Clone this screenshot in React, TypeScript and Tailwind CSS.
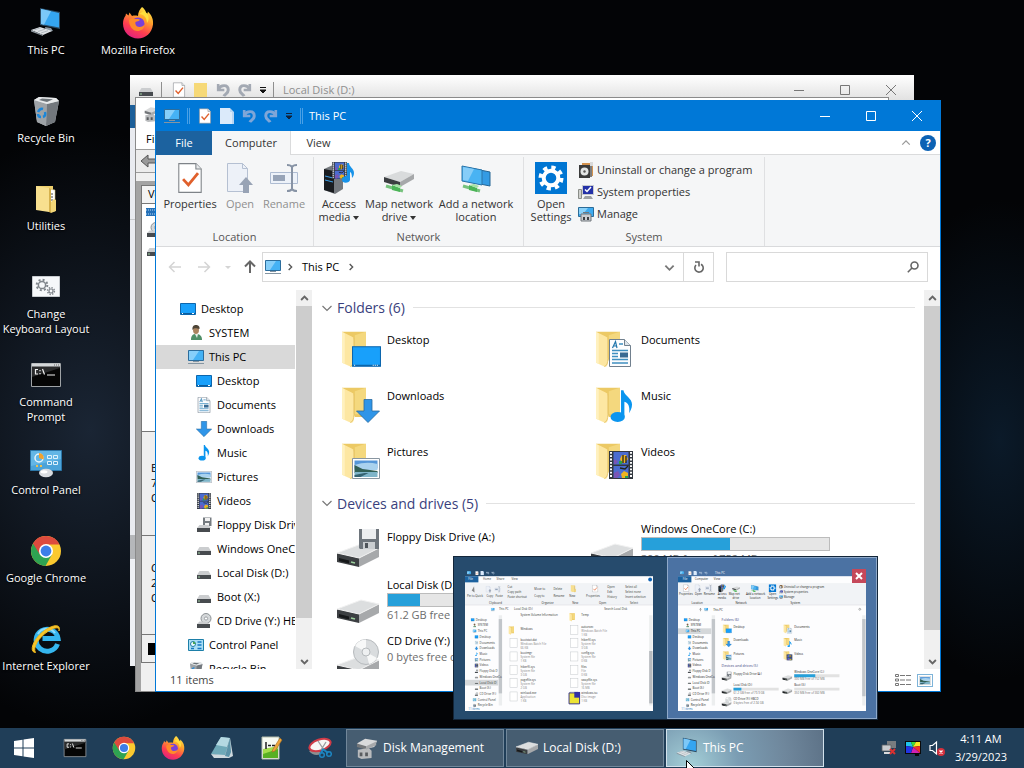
import type { ReactNode, SVGProps } from "react";

type IconProps = SVGProps<SVGSVGElement>;
type Icon = (props: IconProps) => ReactNode;

/* ---------- Icons ---------- */

const PcAngled: Icon = (p) => (
  <svg viewBox="0 0 32 32" {...p}>
    <path d="M10 1l20 4v17L10 18z" fill="#2b4a63" />
    <path d="M11 2l18 4v14.500L11 17z" fill="#35a5f0" />
    <path d="M11 2l10 2.200L14 17.700l-3-.7z" fill="#7cc8f8" />
    <path d="M15 20l6 1 2 3-7 1z" fill="#8b98a3" />
    <path d="M1 23l9-3 12 4-9 4z" fill="#dfe3e6" />
    <path d="M1 23l12 5v1L1 24.500z" fill="#8f989f" />
    <path d="M4 23l7-2.300M8 24.500l7-2.300M11 26l7-2.300" stroke="#a8b0b6" strokeWidth=".8" />
  </svg>
);

const PcFlat: Icon = (p) => (
  <svg viewBox="0 0 16 16" {...p}>
    <path d="M.5 1.500h15v10H.5z" fill="#45b2f5" stroke="#2c6d9c" />
    <path d="M1 2h10L5 11H1z" fill="#86cffa" />
    <path d="M0 14.500h16M5 12.500h6" stroke="#8495a2" />
  </svg>
);

const DesktopFlat: Icon = (p) => (
  <svg viewBox="0 0 16 16" {...p}>
    <path d="M.5 2.500h15v11H.5z" fill="#18a0fb" stroke="#0c66ad" />
    <path d="M1 12.500h14" stroke="#0b5c9c" />
    <path d="M2 12.500h1M12 12.500h2" stroke="#fff" />
  </svg>
);

const RecycleBin: Icon = (p) => (
  <svg viewBox="0 0 32 32" {...p}>
    <path d="M4 5l5-3 17 1 3 3-4 21-9 4-9-4z" fill="#bfc3c6" />
    <path d="M4 5l13 4-1 22-9-4z" fill="#9ea3a7" />
    <path d="M17 9l12-3-4 21-9 4z" fill="#73787d" />
    <path d="M4 5l5-3 17 1 3 3-12 3z" fill="#e8eaeb" />
    <path d="M9 5l3-1.500 11 .8L17 7z" fill="#6c7378" />
    <path d="M8 17q2-4 5-3M15 17q1 4-2 5M11 22q-3 0-3-3" fill="none" stroke="#1c86d8" strokeWidth="2.400" />
  </svg>
);

const UtilitiesFolder: Icon = (p) => (
  <svg viewBox="0 0 32 32" {...p}>
    <path d="M6 3h17v25H12z" fill="#efd06c" />
    <path d="M19 6l6 1v21h-6z" fill="#fff" stroke="#ccb977" strokeWidth=".6" />
    <path d="M21 11h2M21 14h2M21 17h2M21 20h2" stroke="#4a4a4a" />
    <path d="M6 3l13 2v24L6 27z" fill="#f8e08f" />
    <path d="M19 5v24l2 1V6z" fill="#d6b24e" />
    <path d="M24 16l2 1v11l-5 2V19z" fill="#f3d678" />
  </svg>
);

const Gears: Icon = (p) => (
  <svg viewBox="0 0 32 32" {...p}>
    <path d="M2.500 5.500h27v20h-27z" fill="#f6f8fa" stroke="#c8ccd0" />
    <circle cx="12" cy="14" r="3.600" fill="none" stroke="#80868c" strokeWidth="1.500" />
    <circle cx="12" cy="14" r="5.300" fill="none" stroke="#80868c" strokeWidth="2" strokeDasharray="2 2.160" />
    <circle cx="21" cy="20" r="2" fill="none" stroke="#80868c" strokeWidth="1.200" />
    <circle cx="21" cy="20" r="3.400" fill="none" stroke="#80868c" strokeWidth="1.500" strokeDasharray="1.400 1.270" />
  </svg>
);

const Cmd: Icon = (p) => (
  <svg viewBox="0 0 32 28" {...p}>
    <path d="M1.500 2.500h29v23h-29z" fill="#050505" stroke="#9fa3a6" />
    <path d="M2 4v12l28-9V4z" fill="#2a2b2c" />
    <path d="M2 4h28" stroke="#d5d8da" strokeWidth="3" />
    <path d="M24 4h5" stroke="#666" strokeDasharray="1 1" />
    <path d="M8 8.500H5.500v4.500H8M10 9v1.200M10 12v1.200M12.500 8l2 5.500M17 14h8" fill="none" stroke="#f1f1f1" strokeWidth="1.200" />
  </svg>
);

const ControlPanelIcon: Icon = (p) => (
  <svg viewBox="0 0 32 30" {...p}>
    <path d="M.5 2.500h31v20H.5z" fill="#4ba3d9" stroke="#2b76a8" />
    <path d="M1 3h30v8L1 18z" fill="#63b6e6" />
    <circle cx="9" cy="10" r="4" fill="none" stroke="#e7f4fc" strokeWidth="1.500" />
    <path d="M9 10V5a5 5 0 0 1 4.600 6.500z" fill="#f2a22c" />
    <path d="M17.500 7.500h4v3h-4zM23.500 7.500h4v3h-4zM17.500 13.500h4v3h-4zM23.500 13.500h4v3h-4z" fill="none" stroke="#dff1fb" />
    <path d="M6 18h2M10 18h2" stroke="#f2c14c" strokeWidth="2" />
    <ellipse cx="16" cy="25" rx="7" ry="4.200" fill="#d9dce0" />
    <ellipse cx="14" cy="23.800" rx="3.500" ry="1.600" fill="#fff" />
  </svg>
);

const ControlPanelSmall: Icon = (p) => (
  <svg viewBox="0 0 16 16" {...p}>
    <path d="M.5 2.500h15v11H.5z" fill="#a9def5" stroke="#1d7fa8" />
    <circle cx="5" cy="7" r="2.500" fill="#eefbff" stroke="#1d7fa8" />
    <path d="M5 7V4.500A2.500 2.500 0 0 1 7.500 7z" fill="#46a651" />
    <path d="M9.500 5h4M9.500 8h4M3 11.500h3M9.500 11.500h4" stroke="#1679c2" strokeWidth="1.500" />
  </svg>
);

const Chrome: Icon = (p) => (
  <svg viewBox="0 0 32 32" {...p}>
    <circle cx="16" cy="16" r="15" fill="#fbc92f" />
    <path d="M16 16L3 8.500A15 15 0 0 0 15.500 31L22 19.500z" fill="#2ea352" />
    <path d="M3 8.500A15 15 0 0 1 29.500 9.500H16L9.900 19.500z" fill="#dd4b3e" />
    <circle cx="16" cy="16" r="7" fill="#fff" />
    <circle cx="16" cy="16" r="5.400" fill="#3c7ee8" />
  </svg>
);

const Firefox: Icon = (p) => (
  <svg viewBox="0 0 32 32" {...p}>
    <defs>
      <linearGradient id="fx" x1=".8" y1="0" x2=".3" y2="1">
        <stop offset="0" stopColor="#fff04a" />
        <stop offset=".35" stopColor="#ffa22b" />
        <stop offset=".7" stopColor="#ff3f4f" />
        <stop offset="1" stopColor="#e0207f" />
      </linearGradient>
    </defs>
    <path d="M20 0c4 3 4 6 5 7 0 0 1-1 .8-2.500C30 8 31.500 13 31 17.500 30 26 23.500 31.500 16 31.500 7.500 31.500 1 25 1 16.500c0-3 1-6 2.500-7.800L4 6.500l2.500 2 1-3L10 9c2-.6 4-.6 6 0 0-4 2-7 4-9z" fill="url(#fx)" />
    <circle cx="16" cy="17" r="6.600" fill="#7a40d8" />
    <path d="M7 13c2-2 5-1.500 6.500-1 1.500 0 3 0 4.500.8-1 1.500-3 1.700-4.500 2.200-.5 2 .5 5 4 5 2.500 0 4-1 5.500-3-.5 5-4 7-7.500 7C10.500 24 7 19 7 13z" fill="#ff8a2a" />
    <path d="M17 7c5 0 8 4 8 9 3-4 2-9-3-12z" fill="#ffdf3d" />
  </svg>
);

const InternetExplorer: Icon = (p) => (
  <svg viewBox="0 0 32 32" {...p}>
    <path d="M27.500 21A11 11 0 1 1 28 15.500H12.500" fill="none" stroke="#35b6ef" strokeWidth="5" />
    <path d="M8 11a10 10 0 0 1 17-1" fill="none" stroke="#8fdcfb" strokeWidth="2" />
    <path d="M5.500 29.500C-2 29 4 14 16 6.500 24 1.500 31 .8 29 8 30 3.500 25 4 18.500 8 8 14.500 2.500 25.500 5.500 29.500z" fill="#f7c52b" stroke="#f0b81c" />
  </svg>
);

const Folder: Icon = (p) => (
  <svg viewBox="0 0 48 48" {...p}>
    <path d="M0 4h26v32H14z" fill="#ecc964" />
    <path d="M14 8l12-4v29H14z" fill="#f4d87e" />
    <path d="M0 4l10 5q3 1 3 4v24q0 6-4 5L0 38z" fill="#fde7a2" />
    <path d="M0 4l3 2v33l-3-1z" fill="#fff1bf" />
    <path d="M13 11v22q0 8-4 9" fill="none" stroke="#e5c56b" />
  </svg>
);

const DocPage: Icon = (p) => (
  <svg viewBox="0 0 22 28" {...p}>
    <path d="M.5.5h15l6 6v21H.5z" fill="#fdfdfe" stroke="#71808e" />
    <path d="M15.500.5v6h6" fill="#dde4ea" stroke="#71808e" />
    <path d="M3.500 9l3-6.500L8 9M5 7h3" fill="none" stroke="#2277ad" strokeWidth="1.200" />
    <path d="M10 5h4M3 11.500h16M3 14.500h6M3 17.500h6M3 20.500h16M3 24h16" stroke="#3f8fc0" strokeWidth="1.300" />
    <path d="M11 13.500h8v5h-8z" fill="#396a92" />
  </svg>
);

const DownArrow: Icon = (p) => (
  <svg viewBox="0 0 24 24" {...p}>
    <path d="M8 .5h8V12h7.500L12 23.500.5 12H8z" fill="#2f95e8" stroke="#28699f" strokeWidth=".8" />
  </svg>
);

const Note: Icon = (p) => (
  <svg viewBox="0 0 24 34" {...p}>
    <ellipse cx="8" cy="28" rx="7.500" ry="5.200" fill="#0a95ef" />
    <path d="M11.500 0h2.500c1 6 9 8 9 15 0 4-2 7-3 9 1-7-1-11-5-12v16h-3.500z" fill="#0a95ef" />
  </svg>
);

const Photo: Icon = (p) => (
  <svg viewBox="0 0 28 21" preserveAspectRatio="none" {...p}>
    <path d="M.5.5h27v20H.5z" fill="#fff" stroke="#8996a1" />
    <path d="M2.500 2.500h23v8h-23z" fill="#5597d8" />
    <path d="M2.500 7q12-4 23-1v6h-23z" fill="#a9d2ee" />
    <path d="M2.500 7l8 4 15 2v2h-23z" fill="#315f55" />
    <path d="M2.500 14h23v5h-23z" fill="#7fb5c9" />
    <path d="M2.500 17l10-2h4l-8 4h-6z" fill="#356371" />
  </svg>
);

const Film: Icon = (p) => (
  <svg viewBox="0 0 24 28" preserveAspectRatio="none" {...p}>
    <path d="M0 0h24v28H0z" fill="#333840" />
    <path d="M2 1v26M22 1v26" stroke="#fff" strokeWidth="2" strokeDasharray="1.800 1.500" />
    <path d="M4.500 1h15v12.500h-15zM4.500 15h15v12h-15z" fill="#4b6cd0" />
    <path d="M13 4h4l2 4-3 4h-3l-2-4zM12 23l3-3 4 2v5h-6z" fill="#efb320" />
    <path d="M5 8l4 2-2 3H5zM5 22l4-2 2 4-3 3H5z" fill="#7a55b5" />
    <path d="M14 4v8M17 5v7M11 17l5 1 3-3" fill="none" stroke="#20241e" strokeWidth="1.300" />
    <path d="M10 10h3v3h-3zM16 25h3v2h-3z" fill="#2aa24a" />
  </svg>
);

const Person: Icon = (p) => (
  <svg viewBox="0 0 16 16" {...p}>
    <path d="M3 15c0-5 2-6 5-6s6 1 6 6z" fill="#4f8f68" />
    <path d="M7 9h3l-1 4z" fill="#e9efe9" />
    <ellipse cx="8" cy="5" rx="3" ry="4" fill="#a9835f" />
    <path d="M4.500 5C4 1 6 0 8 0s4 1 3.500 4C9 4 7 2 4.500 5z" fill="#4d4436" />
  </svg>
);

const SmallDrive: Icon = (p) => (
  <svg viewBox="0 0 16 16" {...p}>
    <path d="M3.500 6h9L15 10H1z" fill="#cbcdcf" />
    <path d="M1 10h14v4H1z" fill="#474b4f" />
    <path d="M2 12h2" stroke="#9fd0a0" />
  </svg>
);

const SmallFloppy: Icon = (p) => (
  <svg viewBox="0 0 16 16" {...p}>
    <path d="M7 .5h8.500V9H7z" fill="#757b80" />
    <path d="M9 1h5v3H9zM9 6h4v3H9z" fill="#f1f1f1" />
    <path d="M3.500 8h9l2.500 3H1z" fill="#cbcdcf" />
    <path d="M1 11h13v4H1z" fill="#474b4f" />
  </svg>
);

const SmallCd: Icon = (p) => (
  <svg viewBox="0 0 16 16" {...p}>
    <circle cx="10" cy="5.500" r="5" fill="#d5d8da" stroke="#8c9195" />
    <circle cx="10" cy="5.500" r="1.600" fill="#fff" stroke="#8c9195" strokeWidth=".8" />
    <path d="M3.500 8.500h5l5 2.500H1z" fill="#cbcdcf" />
    <path d="M1 11h13v4H1z" fill="#474b4f" />
  </svg>
);

const DriveBody = () => (
  <>
    <path d="M0 27l24-9 18 4-20 10z" fill="#dcdedf" />
    <path d="M0 27l22 5v9L0 36z" fill="#3c3f42" />
    <path d="M22 32l20-10v9L22 41z" fill="#a7a9ab" />
    <path d="M0 27l24-9 18 4-20 10z" fill="none" stroke="#f2f2f2" />
    <path d="M2 32l10 2.500v3L2 35z" fill="#16181a" />
    <path d="M14 36l4 1" stroke="#9ccf9d" strokeWidth="1.300" />
  </>
);

const Drive: Icon = (p) => <svg viewBox="0 0 42 42" {...p}><DriveBody /></svg>;

const FloppyDrive: Icon = (p) => (
  <svg viewBox="0 0 42 42" {...p}>
    <DriveBody />
    <path d="M22 3h20v20H23l-1-1z" fill="#6e757c" />
    <path d="M25 3h14v10H25z" fill="#eceef0" />
    <path d="M26 16h12v7H26z" fill="#c9cdd0" />
    <path d="M28 17h3v5h-3z" fill="#4e545a" />
  </svg>
);

const CdDrive: Icon = (p) => (
  <svg viewBox="0 0 42 42" {...p}>
    <DriveBody />
    <circle cx="29" cy="14" r="12.500" fill="#d9dcde" stroke="#b6babd" />
    <path d="M29 14L18 8a12.500 12.500 0 0 1 11-6.500zM29 14l11 6a12.500 12.500 0 0 1-8 6z" fill="#f7f8f8" />
    <circle cx="29" cy="14" r="4" fill="#eef0f1" stroke="#b6babd" />
  </svg>
);

const PageCheck: Icon = (p) => (
  <svg viewBox="0 0 24 30" {...p}>
    <path d="M1.500 1.500h16l5 5v22h-21z" fill="#fff" stroke="#7e8388" />
    <path d="M17.500 1.500v5h5" fill="#e8eaec" stroke="#7e8388" />
    <path d="M5.500 16l5 5.500 9-11" fill="none" stroke="#e0602c" strokeWidth="2.600" />
  </svg>
);

const PageBlank: Icon = (p) => (
  <svg viewBox="0 0 14 16" {...p}><path d="M0 0h10v4h3v12H0z" fill="#dbeafa" /><path d="M10 0l4 4v12h-2V4h-2z" fill="#b9d5f3" /></svg>
);

const Undo: Icon = (p) => (
  <svg viewBox="0 0 16 16" {...p}>
    <path d="M2.500 1v7h7" fill="none" stroke="currentColor" strokeWidth="3" />
    <path d="M3 7c2-5 11-6 11 1 0 4-4 5-5 7" fill="none" stroke="currentColor" strokeWidth="3.400" />
  </svg>
);

const QuickCaret: Icon = (p) => (
  <svg viewBox="0 0 8 8" {...p}><path d="M1 1.500h6M1 4h6L4 7z" fill="currentColor" stroke="currentColor" /></svg>
);

const OpenPage: Icon = (p) => (
  <svg viewBox="0 0 32 32" {...p}>
    <path d="M3.500 1.500h15l5 5v23h-20z" fill="#edf1f8" stroke="#b5c0d2" />
    <path d="M18.500 1.500v5h5" fill="none" stroke="#b5c0d2" />
    <path d="M22 15l7 8h-4v8h-6v-8h-4z" fill="#98a3b5" />
  </svg>
);

const RenameIcon: Icon = (p) => (
  <svg viewBox="0 0 32 32" {...p}>
    <path d="M2.500 10.500h27v11h-27z" fill="#edf2f9" stroke="#aebcd2" />
    <path d="M5 13h12v6H5z" fill="#97a4b8" />
    <path d="M19 3q4 0 5 2 1-2 5-2M24 5v22M19 29q4 0 5-2 1 2 5 2" fill="none" stroke="#8793a5" strokeWidth="2" />
  </svg>
);

const AccessMedia: Icon = (p) => (
  <svg viewBox="0 0 32 32" {...p}>
    <path d="M1 7l9-4 10 2v22l-8 5-11-4z" fill="#74797e" />
    <path d="M1 7l10 2v22L1 28z" fill="#191c20" />
    <path d="M2 14l8 2M2 18l8 2" stroke="#3da1ea" />
    <svg x="9" y="0" width="15" height="17"><Film width="15" height="17" /></svg>
    <path d="M26 1c0 4 5 5 5 10 0 2-1 4-2 5 0-4-1-6-2-6v8c0 3-8 4-8 0 0-3 3-4 5-4V1z" fill="#1893e9" />
  </svg>
);

const NetPlug = () => (
  <>
    <path d="M3 24l17 5" stroke="#76c27d" strokeWidth="3" />
    <path d="M9 23l8 3v4l-8-2z" fill="#4bb457" />
    <path d="M9 23l5-1 5 2-2 2z" fill="#a6e1a5" />
  </>
);

const NetDrive: Icon = (p) => (
  <svg viewBox="0 0 32 32" {...p}>
    <path d="M1 15l17-6 13 3-14 8z" fill="#d9dbdc" />
    <path d="M1 15l16 5v5L1 20z" fill="#3b3e41" />
    <path d="M17 20l14-8v5l-14 8z" fill="#a6a8aa" />
    <NetPlug />
  </svg>
);

const NetLocation: Icon = (p) => (
  <svg viewBox="0 0 32 32" {...p}>
    <path d="M10 6l20 4v14l-20-4z" fill="#349be4" stroke="#246594" />
    <path d="M2 4l20 4v15L2 19z" fill="#49b3f3" stroke="#2b74a8" />
    <path d="M3 5l11 2-6 12-5-1z" fill="#86cdf8" />
    <NetPlug />
  </svg>
);

const SettingsTile: Icon = (p) => (
  <svg viewBox="0 0 32 32" {...p}>
    <path d="M0 0h32v32H0z" fill="#0076d3" />
    <circle cx="16" cy="16" r="7.300" fill="none" stroke="#fff" strokeWidth="4" />
    <circle cx="16" cy="16" r="10.500" fill="none" stroke="#fff" strokeWidth="4" strokeDasharray="4.200 4.046" />
  </svg>
);

const Uninstall: Icon = (p) => (
  <svg viewBox="0 0 16 16" {...p}>
    <path d="M4 1h11v13H4z" fill="#d3924e" />
    <path d="M12 0h3v4h-3z" fill="#d9d9d9" />
    <path d="M1 3h11v13H1z" fill="#3a3b3b" />
    <circle cx="6.500" cy="9.500" r="4" fill="#e3e5e5" />
    <circle cx="6.500" cy="9.500" r="1.200" fill="#585858" />
    <path d="M13 4v11" stroke="#7d7d7d" strokeWidth="2" />
  </svg>
);

const SystemProps: Icon = (p) => (
  <svg viewBox="0 0 16 16" {...p}>
    <path d="M.5 5.500h3v9h-3z" fill="#cfd0cd" stroke="#8a8d88" />
    <path d="M4 1h12v10H4z" fill="#c7cacf" />
    <path d="M5 2h10v8H5z" fill="#2431a8" />
    <path d="M7 5.500l2 2 4-4.500" fill="none" stroke="#fff" strokeWidth="1.500" />
    <path d="M7 12h6l2 3H5z" fill="#9ea1a4" />
  </svg>
);

const ManageIcon: Icon = (p) => (
  <svg viewBox="0 0 16 16" {...p}>
    <path d="M.5 1.500h15v9H.5z" fill="#3fabf0" stroke="#2c6c98" />
    <path d="M1 2h9L5 8H1z" fill="#8ad2fa" />
    <path d="M5 6.500h6M3 8h10v7H3z" fill="#c9cdd1" stroke="#70767c" />
    <path d="M5 11h2v3H5zM9 11h2v3H9z" fill="#3c4146" />
  </svg>
);

const DiskMgmtIcon: Icon = (p) => (
  <svg viewBox="0 0 24 24" {...p}>
    <path d="M1 7l9-5 13 2-3 7-10 2z" fill="#d9dadb" />
    <path d="M1 7l10 3v4L1 11z" fill="#74777a" />
    <path d="M2 14l12-2 3 3v8l-11 1-4-2z" fill="#b9bbbd" />
    <path d="M4 17h3v4H4zM10 17h3v4h-3z" fill="#595c5f" />
    <path d="M11 10l11-5v4l-11 5z" fill="#a7a9ab" />
  </svg>
);

const WinLogo: Icon = (p) => (
  <svg viewBox="0 0 22 22" {...p}>
    <path d="M1 4l8.500-1.300v7.800H1zM10.500 2.500L21 1v9.500H10.500zM1 11.500h8.500v7.800L1 18zM10.500 11.500H21V21l-10.500-1.500z" fill="#fff" />
  </svg>
);

const Notepad: Icon = (p) => (
  <svg viewBox="0 0 24 24" {...p}>
    <path d="M11 1l9 1-5 18-14-2z" fill="#6fa9b8" />
    <path d="M11 1l9 1-3 9L6 9z" fill="#b5d9e2" />
    <path d="M20 2l3 18-4 2H4l-3-4 14 1z" fill="#cfd9de" />
    <path d="M20 2l-5 18 4 1 2-5z" fill="#5c93a8" />
  </svg>
);

const NotepadPlus: Icon = (p) => (
  <svg viewBox="0 0 24 24" {...p}>
    <path d="M3 1h17v22H3z" fill="#f7faf2" stroke="#b4bba9" />
    <path d="M4 13l15-3v12H4z" fill="#a5dd4c" />
    <path d="M4 18l15-5v9H4z" fill="#58b024" />
    <path d="M7 6v7M9 9.500h3M13 9.500h3" stroke="#222" strokeWidth="1.500" />
    <path d="M21 2l2 2-7 11-3 1 1-3z" fill="#eda43b" stroke="#a36b1f" strokeWidth=".6" />
  </svg>
);

const Snip: Icon = (p) => (
  <svg viewBox="0 0 24 24" {...p}>
    <path d="M1 15q5 6 12 3l-3-5z" fill="#8d9091" />
    <ellipse cx="12" cy="9" rx="11" ry="5.500" fill="#f7f6f5" stroke="#cf3b47" strokeWidth="2" transform="rotate(-18 12 9)" />
    <path d="M10 5l6 9M18 6l-5 8" stroke="#9a9da0" strokeWidth="1.300" />
    <path d="M15 13l-2 4M15 13l5 4" stroke="#1d86c2" strokeWidth="2" />
    <circle cx="14" cy="19" r="2.300" fill="none" stroke="#1d86c2" strokeWidth="1.500" />
    <circle cx="21" cy="18" r="2.300" fill="none" stroke="#1d86c2" strokeWidth="1.500" />
  </svg>
);

const Chevron: Icon = (p) => (
  <svg viewBox="0 0 12 12" fill="none" stroke="currentColor" strokeWidth="1.500" {...p}><path d="M1.500 4l4.500 4.500L10.500 4" /></svg>
);

const Arrow: Icon = (p) => (
  <svg viewBox="0 0 14 14" fill="none" stroke="currentColor" strokeWidth="1.500" {...p}><path d="M13 7H2M6.500 2L1.500 7l5 5" /></svg>
);

const BadgeX = () => (
  <>
    <circle cx="12" cy="12" r="4" fill="#d5303d" />
    <path d="M10.500 10.500l3 3M13.500 10.500l-3 3" stroke="#fff" strokeWidth="1.300" />
  </>
);

const NetTray: Icon = (p) => (
  <svg viewBox="0 0 16 16" {...p}>
    <path d="M6 1h9v7H6z" fill="#797c80" />
    <path d="M1 5h9v6H1z" fill="#c9cccf" stroke="#5b5e61" strokeWidth=".8" />
    <path d="M3 13h6" stroke="#d9dbdd" strokeWidth="2" />
    <path d="M9 9l5 5M14 9l-5 5" stroke="#da3030" strokeWidth="2" />
  </svg>
);

const ColorTray: Icon = (p) => (
  <svg viewBox="0 0 16 16" {...p}>
    <path d="M0 1h16v13h-2v2h-4v-2H0z" fill="#0a0a0a" />
    <path d="M1 2h5l2 5-7-1z" fill="#1fc3ea" />
    <path d="M6 2h5L8 7z" fill="#3ddc3d" />
    <path d="M11 2h4v4L8 7z" fill="#f6ea24" />
    <path d="M15 6v7L8 7z" fill="#f0312a" />
    <path d="M15 13H6l2-6z" fill="#d021b4" />
    <path d="M6 13H1V6l7 1z" fill="#2235e4" />
  </svg>
);

const VolumeTray: Icon = (p) => (
  <svg viewBox="0 0 16 16" {...p}>
    <path d="M1 5.500h2.500L7.500 2v12l-4-3.500H1z" fill="none" stroke="#fff" strokeWidth="1.200" />
    <BadgeX />
  </svg>
);

/* ---------- Desktop ---------- */

const desktopColumns: { lines: string[]; icon: Icon }[][] = [
  [
    { lines: ["This PC"], icon: PcAngled },
    { lines: ["Recycle Bin"], icon: RecycleBin },
    { lines: ["Utilities"], icon: UtilitiesFolder },
    { lines: ["Change", "Keyboard Layout"], icon: Gears },
    { lines: ["Command", "Prompt"], icon: Cmd },
    { lines: ["Control Panel"], icon: ControlPanelIcon },
    { lines: ["Google Chrome"], icon: Chrome },
    { lines: ["Internet Explorer"], icon: InternetExplorer },
  ],
  [{ lines: ["Mozilla Firefox"], icon: Firefox }],
];

function DesktopIcons() {
  return (
    <div className="flex">
      {desktopColumns.map((column, c) => (
        <div key={c} className="flex w-[92px] flex-col">
          {column.map(({ lines, icon: I }) => (
            <button key={lines[0]} className="flex h-[88px] flex-col items-center pt-[7px] leading-[15px] text-white">
              <I className="mb-[3px] size-8 shrink-0" />
              {lines.map((line) => <span key={line} className="whitespace-nowrap [text-shadow:0_1px_2px_#000]">{line}</span>)}
            </button>
          ))}
        </div>
      ))}
    </div>
  );
}

/* ---------- Window parts ---------- */

function CaptionButtons({ className }: { className: string }) {
  return (
    <div className={`flex h-full ${className}`}>
      <button aria-label="Minimize" className="grid w-[46px] place-items-center">
        <svg viewBox="0 0 10 10" className="size-[10px]"><path d="M0 5.500h10" stroke="currentColor" /></svg>
      </button>
      <button aria-label="Maximize" className="grid w-[46px] place-items-center">
        <svg viewBox="0 0 10 10" className="size-[10px]"><path d="M.5.5h9v9h-9z" fill="none" stroke="currentColor" /></svg>
      </button>
      <button aria-label="Close" className="grid w-[46px] place-items-center">
        <svg viewBox="0 0 10 10" className="size-[10px]"><path d="M0 0l10 10M10 0L0 10" stroke="currentColor" /></svg>
      </button>
    </div>
  );
}

function LocalDiskWindow() {
  return (
    <section className="absolute top-[75px] left-[130px] flex h-[591px] w-[784px] flex-col bg-[#e9ebf0]">
      <header className="flex h-[30px] items-center bg-gradient-to-b from-white to-[#dcdcdc] pl-2 text-[#8f8f8f]">
        <SmallDrive className="size-4" />
        <span className="mr-[10px] ml-[7px] h-4 w-px bg-[#8f8f8f]" />
        <div className="flex items-center gap-2 text-[#a3a9b3]">
          <PageCheck className="h-4 w-[14px]" />
          <svg viewBox="0 0 14 16" className="h-4 w-[14px]"><path d="M0 1h13v15H0z" fill="#f6d978" /></svg>
          <Undo className="size-[14px]" />
          <Undo className="size-[14px] -scale-x-100" />
        </div>
        <QuickCaret className="ml-[7px] size-2 text-[#111]" />
        <span className="mx-[6px] h-4 w-px bg-[#8f8f8f]" />
        <h2 className="ml-[3px] grow">Local Disk (D:)</h2>
        <CaptionButtons className="text-[#777]" />
      </header>
      <div className="h-[23px] bg-[#1c5f99]" />
      <div className="h-[92px] border-b border-[#c7c9cc]" />
      <div className="grow" />
      <div className="h-6 bg-[#b5b7ba]" />
      <div className="h-[107px] bg-[#eef0f4]" />
    </section>
  );
}

function DiskManagementWindow() {
  return (
    <section className="absolute top-[97px] left-[135px] flex h-[595px] w-[754px] flex-col border border-[#8a8a8a] bg-white text-black">
      <header className="flex h-[31px] items-center pl-2"><DiskMgmtIcon className="size-4" /></header>
      <nav className="h-5 pl-[10px] leading-5">File</nav>
      <div className="flex h-6 items-center border-y border-[#9b9b9b] bg-[#ececec] pl-1">
        <svg viewBox="0 0 16 14" className="h-[14px] w-4"><path d="M1 7l7-6v4h8v4H8v4z" fill="#999" stroke="#555" /></svg>
      </div>
      <div className="h-2 bg-[#f0f0f0]" />
      <div className="flex grow flex-col bg-[#a3a3a3] pt-1 pl-[5px]">
        <div className="h-[247px] border border-[#777] bg-white">
          <div className="h-[18px] border-b border-[#777] bg-[#f3f3f3] pl-[6px]">Volume</div>
          <div className="flex flex-col gap-1 pt-1 pl-1">
            <svg viewBox="0 0 16 10" className="h-[10px] w-4"><path d="M0 0h16v8H0z" fill="#2470b8" /><path d="M0 2h16M0 6h16" stroke="#bcd9f2" strokeDasharray="1 1" /></svg>
            <SmallCd className="size-4" />
            <SmallDrive className="size-4" />
          </div>
        </div>
        <div className="flex h-[104px] flex-col border border-t-0 border-[#777] bg-[#efefef] pt-[28px] pl-[9px] leading-[15px]">
          <span>Basic</span><span>79.98 GB</span><span>Online</span>
        </div>
        <div className="flex h-[99px] flex-col border border-t-0 border-[#777] bg-[#efefef] pt-[24px] pl-[9px] leading-[15px]">
          <span>CD-ROM</span><span>252 MB</span><span>Online</span>
        </div>
        <div className="flex h-[28px] items-center border-x border-b border-[#777] bg-[#f0f0f0] pl-[6px]">
          <span className="size-3 bg-black" />
        </div>
        <div className="grow bg-[#f0f0f0]" />
      </div>
    </section>
  );
}

/* ---------- Explorer window ---------- */

function BigCommand({ icon: I, label, className = "text-[#333]", menu = false }: { icon: Icon; label: ReactNode; className?: string; menu?: boolean }) {
  return (
    <button className={`flex flex-col items-center gap-[3px] leading-[13px] ${className}`}>
      <I className="size-8" />
      <span>
        {label}
        {menu && <svg viewBox="0 0 6 4" className="ml-[3px] inline h-1 w-[6px] align-middle"><path d="M0 0h6L3 4z" fill="#333" /></svg>}
      </span>
    </button>
  );
}

function RibbonGroup({ title, className, children }: { title: string; className: string; children: ReactNode }) {
  return (
    <section className={`mt-[2px] flex flex-col border-r border-[#dfe0e2] ${className}`}>
      <div className="flex h-[72px] items-start pt-[5px]">{children}</div>
      <h3 className="text-center leading-4 text-[#555]">{title}</h3>
    </section>
  );
}

const systemCommands = [
  { label: "Uninstall or change a program", icon: Uninstall },
  { label: "System properties", icon: SystemProps },
  { label: "Manage", icon: ManageIcon },
];

function Ribbon() {
  return (
    <div className="flex h-[92px] shrink-0 border-b border-[#d9dadc] bg-[#f5f6f7]">
      <RibbonGroup title="Location" className="w-[158px]">
        <BigCommand icon={PageCheck} label="Properties" className="w-[68px] text-[#333]" />
        <BigCommand icon={OpenPage} label="Open" className="w-[32px] text-[#8f8f8f]" />
        <BigCommand icon={RenameIcon} label="Rename" className="w-[56px] text-[#8f8f8f]" />
      </RibbonGroup>
      <RibbonGroup title="Network" className="w-[210px]">
        <BigCommand icon={AccessMedia} label={<>Access<br />media</>} menu className="w-[50px] text-[#333]" />
        <BigCommand icon={NetDrive} label={<>Map network<br />drive</>} menu className="w-[70px] text-[#333]" />
        <BigCommand icon={NetLocation} label={<>Add a network<br />location</>} className="w-[84px] text-[#333]" />
      </RibbonGroup>
      <RibbonGroup title="System" className="w-[241px]">
        <BigCommand icon={SettingsTile} label={<>Open<br />Settings</>} className="w-[54px] text-[#333]" />
        <div className="-mt-[3px] flex flex-col">
          {systemCommands.map(({ label, icon: I }) => (
            <button key={label} className="flex h-[22px] items-center gap-[3px] text-[#333]">
              <I className="size-4" />
              {label}
            </button>
          ))}
        </div>
      </RibbonGroup>
    </div>
  );
}

function AddressRow() {
  return (
    <div className="flex shrink-0 items-center pt-[5px] pr-3 pb-2 pl-3">
      <button aria-label="Back" className="w-[29px] text-[#d4d4d4]"><Arrow className="size-[14px]" /></button>
      <button aria-label="Forward" className="w-[27px] text-[#d4d4d4]"><Arrow className="size-[14px] -scale-x-100" /></button>
      <button aria-label="Recent locations" className="w-[19px] text-[#d4d4d4]">
        <svg viewBox="0 0 8 5" className="h-[5px] w-2"><path d="M1 1h6L4 4z" fill="currentColor" /></svg>
      </button>
      <button aria-label="Up" className="w-[19px] text-[#666]"><Arrow className="size-[14px] rotate-90" strokeWidth="2" /></button>
      <div className="flex h-[30px] grow items-center border border-[#d9d9d9] pl-[2px]">
        <PcFlat className="size-4" />
        <Chevron className="ml-[5px] size-2 -rotate-90 text-[#555]" strokeWidth="2" />
        <button className="ml-2">This PC</button>
        <Chevron className="ml-2 size-2 -rotate-90 text-[#555]" strokeWidth="2" />
        <button aria-label="Previous locations" className="ml-auto grid h-full w-[28px] place-items-center text-[#777]"><Chevron className="size-[11px]" strokeWidth="2" /></button>
        <button aria-label="Refresh" className="grid h-full w-[30px] place-items-center border-l border-[#d9d9d9] text-[#666]">
          <svg viewBox="0 0 12 14" className="h-[14px] w-3" fill="none" stroke="currentColor" strokeWidth="1.600"><path d="M8 4.200A4.200 4.200 0 1 1 3 5" /><path d="M2 2h4v4.500" /></svg>
        </button>
      </div>
      <label className="ml-3 flex h-[30px] w-[202px] items-center border border-[#d9d9d9] pr-2">
        <input aria-label="Search This PC" className="min-w-0 grow outline-none" />
        <svg viewBox="0 0 12 12" className="size-3 text-[#666]" fill="none" stroke="currentColor" strokeWidth="1.600"><circle cx="7.500" cy="4.500" r="3.500" /><path d="M5 7L.8 11.200" /></svg>
      </label>
    </div>
  );
}

const tree: { label: string; icon: Icon; level: number }[] = [
  { label: "Desktop", icon: DesktopFlat, level: 0 },
  { label: "SYSTEM", icon: Person, level: 1 },
  { label: "This PC", icon: PcFlat, level: 1 },
  { label: "Desktop", icon: DesktopFlat, level: 2 },
  { label: "Documents", icon: DocPage, level: 2 },
  { label: "Downloads", icon: DownArrow, level: 2 },
  { label: "Music", icon: Note, level: 2 },
  { label: "Pictures", icon: Photo, level: 2 },
  { label: "Videos", icon: Film, level: 2 },
  { label: "Floppy Disk Drive (A:)", icon: SmallFloppy, level: 2 },
  { label: "Windows OneCore (C:)", icon: SmallDrive, level: 2 },
  { label: "Local Disk (D:)", icon: SmallDrive, level: 2 },
  { label: "Boot (X:)", icon: SmallDrive, level: 2 },
  { label: "CD Drive (Y:) HBCD", icon: SmallCd, level: 2 },
  { label: "Control Panel", icon: ControlPanelSmall, level: 1 },
  { label: "Recycle Bin", icon: RecycleBin, level: 1 },
];

const indent = ["pl-6", "pl-8", "pl-10"];

function treeIconClass(icon: Icon) {
  if (icon === Photo) return "h-3 w-4";
  if (icon === Film || icon === DocPage) return "h-4 w-4 px-[1px]";
  return "size-4";
}

function ScrollBar({ thumb }: { thumb: string }) {
  return (
    <div className="flex w-4 shrink-0 flex-col bg-[#f0f0f0]">
      <button aria-label="Scroll up" className="grid h-4 place-items-center text-[#666]"><Chevron className="size-[9px] rotate-180" strokeWidth="2.500" /></button>
      <div className={`bg-[#cdcdcd] ${thumb}`} />
      <button aria-label="Scroll down" className="mt-auto grid h-4 place-items-center text-[#666]"><Chevron className="size-[9px]" strokeWidth="2.500" /></button>
    </div>
  );
}

function NavPane() {
  return (
    <nav className="flex w-[156px] shrink-0">
      <ul className="w-[139px] overflow-hidden pt-[7px]">
        {tree.map(({ label, icon: I, level }, n) => (
          <li key={n}>
            <button className={`flex h-6 w-full items-center gap-[5px] whitespace-nowrap ${indent[level]} ${n === 2 ? "bg-[#d9d9d9]" : ""}`}>
              <I className={`shrink-0 ${treeIconClass(I)}`} />
              {label}
            </button>
          </li>
        ))}
      </ul>
      <div className="ml-px flex"><ScrollBar thumb="h-[312px]" /></div>
    </nav>
  );
}

const DesktopTile: Icon = (p) => (
  <svg viewBox="0 0 28 20" {...p}>
    <path d="M.5.5h27v19H.5z" fill="#18a0fb" stroke="#0c66ad" />
    <path d="M1 18.500h26" stroke="#0b5c9c" />
    <path d="M2 18.500h2M20 18.500h6" stroke="#fff" strokeDasharray="1 1" />
  </svg>
);

const folders: { label: string; icon: Icon; className: string }[] = [
  { label: "Desktop", icon: DesktopTile, className: "h-[21px] w-[29px] right-0" },
  { label: "Documents", icon: DocPage, className: "h-[28px] w-[22px] right-[4px]" },
  { label: "Downloads", icon: DownArrow, className: "size-6 right-[1px]" },
  { label: "Music", icon: Note, className: "h-[33px] w-[23px] right-[2px]" },
  { label: "Pictures", icon: Photo, className: "h-[21px] w-[28px] right-[1px]" },
  { label: "Videos", icon: Film, className: "h-[28px] w-[24px] right-[2px]" },
];

function SectionHeader({ title }: { title: string }) {
  return (
    <div className="flex h-6 items-center pl-[9px]">
      <Chevron className="size-3 text-[#777]" strokeWidth="1.200" />
      <h2 className="ml-1 text-[14px] text-[#3a3f7d]">{title}</h2>
      <span className="ml-2 h-px grow bg-[#e2e2e2]" />
    </div>
  );
}

function UsageBar({ used }: { used: number }) {
  return (
    <div className="h-[14px] w-[189px] border border-[#bcbcbc] bg-[#e6e6e6]">
      <div className="h-full bg-[#26a0da]" style={{ width: `${used}%` }} />
    </div>
  );
}

function ContentPane() {
  return (
    <main className="flex grow flex-col overflow-hidden pt-[7px] pr-[9px]">
      <SectionHeader title="Folders (6)" />
      <div className="mt-[6px] grid grid-cols-[254px_254px] pl-[30px]">
        {folders.map(({ label, icon: I, className }) => (
          <button key={label} className="flex h-14 items-start gap-[6px] text-left">
            <span className="relative block h-[44px] w-[39px]">
              <Folder className="mt-1 h-[44px] w-[44px]" />
              <I className={`absolute bottom-[1px] ${className}`} />
            </span>
            <span className="pt-2 leading-4">{label}</span>
          </button>
        ))}
      </div>
      <div className="-mt-px"><SectionHeader title="Devices and drives (5)" /></div>
      <div className="mt-[6px] grid auto-rows-[56px] grid-cols-[254px_254px] pl-[25px]">
        <button className="flex items-start gap-2 text-left">
          <FloppyDrive className="mt-[5px] size-[42px]" />
          <span className="pt-2 leading-4">Floppy Disk Drive (A:)</span>
        </button>
        <button className="flex items-start gap-2 text-left">
          <Drive className="mt-[5px] size-[42px]" />
          <span className="leading-4">Windows OneCore (C:)<UsageBar used={47} /><span className="text-[#6d6d6d]">390 MB free of 752 MB</span></span>
        </button>
        <button className="flex items-start gap-2 text-left">
          <Drive className="mt-[5px] size-[42px]" />
          <span className="leading-4">Local Disk (D:)<UsageBar used={17} /><span className="text-[#6d6d6d]">61.2 GB free of 79.9 GB</span></span>
        </button>
        <span />
        <button className="flex items-start gap-2 text-left">
          <CdDrive className="mt-[5px] size-[42px]" />
          <span className="flex flex-col leading-4"><span>CD Drive (Y:) HBCD</span><span className="text-[#6d6d6d]">0 bytes free of 2.94 GB</span><span className="text-[#6d6d6d]">UDF</span></span>
        </button>
      </div>
    </main>
  );
}

function ExplorerWindow() {
  return (
    <section className="absolute top-[100px] left-[155px] flex h-[592px] w-[786px] flex-col border border-[#0078d7] bg-white text-black">
      <header className="flex h-[30px] shrink-0 items-center bg-[#0078d7] pl-2 text-white">
        <PcFlat className="size-4" />
        <span className="mr-2 ml-[7px] h-4 w-[3px] border-x border-[#4aa0e6]" />
        <div className="flex items-center gap-2 text-[#7fa6d8]">
          <PageCheck className="h-4 w-[14px]" />
          <PageBlank className="h-4 w-[14px]" />
          <Undo className="size-[14px]" />
          <Undo className="size-[14px] -scale-x-100" />
        </div>
        <QuickCaret className="mx-[7px] size-2 text-[#10223a]" />
        <span className="mr-[6px] h-4 w-[3px] border-x border-[#4aa0e6]" />
        <h1 className="grow">This PC</h1>
        <CaptionButtons className="text-white" />
      </header>
      <div role="tablist" className="flex h-6 shrink-0 items-stretch text-[#333]">
        <button role="tab" className="w-14 bg-[#1c629f] text-white">File</button>
        <button role="tab" aria-selected className="w-[79px] border-r border-[#dadbdc] bg-[#f5f6f7]">Computer</button>
        <div className="flex grow items-stretch border-b border-[#dadbdc] pr-1">
          <button role="tab" className="w-[55px] pt-px">View</button>
          <button aria-label="Collapse ribbon" className="mr-[9px] ml-auto text-[#999]"><Chevron className="size-[10px] rotate-180" /></button>
          <button aria-label="Help" className="grid size-4 place-items-center self-center rounded-full bg-[#0c62b4] font-bold leading-none text-white">?</button>
        </div>
      </div>
      <Ribbon />
      <AddressRow />
      <div className="flex min-h-0 grow">
        <NavPane />
        <ContentPane />
        <ScrollBar thumb="h-[324px]" />
      </div>
      <footer className="flex h-[22px] shrink-0 items-center pr-[7px] pl-[14px] text-[#444]">
        <span className="grow">11 items</span>
        <button aria-label="Details view" className="mr-[6px]">
          <svg viewBox="0 0 16 12" className="h-3 w-4"><path d="M.5.5h3v2h-3zM.5 5h3v2h-3zM.5 9.500h3v2h-3zM5 1.500h5M11 1.500h5M5 6h5M11 6h5M5 10.500h5M11 10.500h5" fill="none" stroke="#777" /></svg>
        </button>
        <button aria-label="Large icons view" className="border border-[#7eb4d9] p-px"><Photo className="h-[9px] w-3" /></button>
      </footer>
    </section>
  );
}

/* ---------- Taskbar previews ---------- */

const fileCards: { x: number; y: number; title: string; lines: string[] }[] = [
  { x: 232, y: 186, title: "System Volume Information", lines: [] },
  { x: 486, y: 186, title: "Temp", lines: [] },
  { x: 232, y: 242, title: "Windows", lines: [] },
  { x: 486, y: 234, title: "autoexec", lines: ["Windows Batch File", "1 KB"] },
  { x: 232, y: 290, title: "bootstat.dat", lines: ["Windows Batch File", "66 KB"] },
  { x: 486, y: 290, title: "hiberfil.sys", lines: ["System file", "3 GB"] },
  { x: 232, y: 346, title: "bootmgr", lines: ["System file", "1 KB"] },
  { x: 486, y: 346, title: "config.sys", lines: ["System file", "0 KB"] },
  { x: 232, y: 402, title: "hiberfil.sys", lines: ["System file", "3 GB"] },
  { x: 486, y: 402, title: "files", lines: ["File", "0 KB"] },
  { x: 232, y: 458, title: "pagefile.sys", lines: ["System file", "2 GB"] },
  { x: 486, y: 458, title: "swapfile.sys", lines: ["System file", "16 MB"] },
  { x: 232, y: 514, title: "winload.exe", lines: ["Application", "1 KB"] },
  { x: 486, y: 514, title: "windows.iso", lines: ["Disc image", "1 KB"] },
];

function PreviewFrame({ selected, children }: { selected: number; children: ReactNode }) {
  return (
    <>
      <rect y="26" width="786" height="566" fill="#fdfdfe" />
      <rect y="26" width="56" height="26" fill="#1c629f" />
      <rect y="55" width="786" height="92" fill="#f1f3f6" />
      <rect y="146" width="786" height="2" fill="#d5d8da" />
      <PcFlat x="8" y="4" width="18" height="18" />
      <PageCheck x="42" y="4" width="16" height="18" />
      <PageBlank x="64" y="4" width="16" height="18" />
      <Undo x="88" y="6" width="14" height="14" color="#b6cbe0" />
      <Undo x="110" y="6" width="14" height="14" color="#b6cbe0" />
      <rect y={197 + selected * 24} width="139" height="24" fill="#d5d8da" />
      <rect x="141" y="190" width="14" height="379" fill="#eceeef" />
      <rect x="141" y="206" width="14" height="312" fill="#c2c6ca" />
      {tree.map(({ label, icon: I, level }, n) => (
        <g key={n}>
          <I x={24 + level * 8} y={201 + n * 24} width="16" height="16" />
          <text x={45 + level * 8} y={213 + n * 24}>{label.slice(0, 13)}</text>
        </g>
      ))}
      <rect x="770" y="190" width="14" height="379" fill="#eceeef" />
      <text x="14" y="586" fill="#2277bb">11 items</text>
      {children}
    </>
  );
}

function LocalDiskPreview() {
  return (
    <svg viewBox="0 0 786 592" preserveAspectRatio="none" className="block h-[141px] w-[188px]" fontSize="12" fill="#333" aria-label="Local Disk (D:) preview">
      <PreviewFrame selected={11}>
        <text x="14" y="44" fill="#fff">File</text><text x="75" y="44">Home</text><text x="132" y="44">Share</text><text x="194" y="44">View</text>
        <circle cx="774" cy="40" r="8" fill="#0c62b4" />
        <path d="M38 68l-10 18 12 8z" fill="#888" />
        <OpenPage x="85" y="66" width="28" height="30" /><RenameIcon x="122" y="66" width="28" height="30" />
        <text x="8" y="112">Pin to Quick</text><text x="90" y="112">Copy</text><text x="128" y="112">Paste</text>
        <text x="178" y="76">Cut</text><text x="178" y="97">Copy path</text><text x="178" y="118">Paste shortcut</text>
        <text x="290" y="82">Move to</text><text x="370" y="82">Delete</text><text x="290" y="112">Copy to</text><text x="370" y="112">Rename</text>
        <UtilitiesFolder x="436" y="62" width="34" height="34" /><text x="436" y="112">New</text>
        <PageCheck x="530" y="62" width="28" height="32" /><text x="506" y="112">Properties</text>
        <text x="595" y="76">Open</text><text x="595" y="97">Edit</text><text x="595" y="118">History</text>
        <text x="670" y="76">Select all</text><text x="670" y="97">Select none</text><text x="670" y="118">Invert selection</text>
        <text x="100" y="141">Clipboard</text><text x="320" y="141">Organize</text><text x="448" y="141">New</text><text x="560" y="141">Open</text><text x="690" y="141">Select</text>
        <PcFlat x="108" y="158" width="16" height="16" /><text x="142" y="170">This PC</text><text x="205" y="170">Local Disk (D:)</text><text x="582" y="170">Search Local Disk</text>
        {fileCards.map(({ x, y, title, lines }) => (
          <g key={`${x}-${y}`}>
            {lines.length === 0 && title !== "System Volume Information" && <Folder x={x - 50} y={y - 8} width="42" height="42" />}
            {lines.length > 0 && <rect x={x - 44} y={y - 2} width="30" height="38" fill="#fff" stroke="#c3c7ca" strokeWidth="2" />}
            <text x={x} y={y + 8}>{title}</text>
            {lines.map((line, n) => <text key={line} x={x} y={y + 25 + n * 17} fill="#888">{line}</text>)}
          </g>
        ))}
        <path d="M435 516h44v46h-44z" fill="#ece334" stroke="#353287" strokeWidth="4" />
        <path d="M457 512h24v24h-24z" fill="#3230a4" />
        <rect x="770" y="340" width="14" height="220" fill="#b6babe" />
      </PreviewFrame>
    </svg>
  );
}

function ThisPcPreview() {
  return (
    <svg viewBox="0 0 786 592" preserveAspectRatio="none" className="block h-[141px] w-[188px]" fontSize="12" fill="#222" aria-label="This PC preview">
      <PreviewFrame selected={2}>
        <text x="155" y="18" fill="#fff">This PC</text>
        <text x="20" y="44" fill="#fff">File</text><text x="70" y="44">Computer</text><text x="150" y="44">View</text>
        <PageCheck x="18" y="60" width="32" height="32" /><OpenPage x="68" y="60" width="32" height="32" /><RenameIcon x="112" y="60" width="32" height="32" />
        <AccessMedia x="168" y="60" width="34" height="34" /><NetDrive x="226" y="60" width="34" height="34" /><NetLocation x="304" y="60" width="34" height="34" />
        <SettingsTile x="379" y="60" width="32" height="32" />
        <text x="4" y="106">Properties</text><text x="70" y="106">Open</text><text x="108" y="106">Rename</text>
        <text x="166" y="106">Access</text><text x="166" y="123">media</text><text x="212" y="106">Map net</text><text x="228" y="123">drive</text>
        <text x="284" y="106">Add a network</text><text x="300" y="123">location</text><text x="380" y="106">Open</text><text x="374" y="123">Settings</text>
        {systemCommands.map(({ label, icon: I }, n) => (
          <g key={label}><I x="423" y={62 + n * 22} width="16" height="16" /><text x="442" y={74 + n * 22}>{label}</text></g>
        ))}
        <text x="56" y="141">Location</text><text x="240" y="141">Network</text><text x="470" y="141">System</text>
        <path d="M94 173v-11M90 166l4-5 4 5" fill="none" stroke="#555" strokeWidth="2" />
        <PcFlat x="110" y="158" width="16" height="16" /><text x="147" y="171">This PC</text>
        <circle cx="760" cy="165" r="4" fill="none" stroke="#666" strokeWidth="2" />
        <rect x="770" y="206" width="14" height="324" fill="#c2c6ca" />
        <g fill="#3a3f7d" fontSize="15"><text x="182" y="213">Folders (6)</text><text x="182" y="409">Devices and drives (5)</text></g>
        {folders.map(({ label, icon: I }, n) => {
          const x = 187 + (n % 2) * 254;
          const y = 226 + Math.floor(n / 2) * 56;
          return (
            <g key={label}><Folder x={x} y={y} width="44" height="44" /><I x={x + 12} y={y + 16} width="26" height="26" /><text x={x + 45} y={y + 18}>{label}</text></g>
          );
        })}
        <FloppyDrive x="182" y="424" width="42" height="42" /><Drive x="436" y="424" width="42" height="42" />
        <Drive x="182" y="480" width="42" height="42" /><Drive x="436" y="480" width="42" height="42" /><CdDrive x="182" y="532" width="42" height="42" />
        <text x="232" y="440">Floppy Disk Drive (A:)</text><text x="486" y="432">Windows OneCore (C:)</text><text x="232" y="488">Local Disk (D:)</text><text x="486" y="488">Boot (X:)</text><text x="232" y="544">CD Drive (Y:) HBCD</text>
        <path d="M486 438h189v12H486zM232 494h189v12H232zM486 494h189v12H486z" fill="#e2e2e2" />
        <path d="M486 438h88v12h-88zM232 494h33v12h-33z" fill="#26a0da" />
        <g fill="#6d6d6d"><text x="486" y="464">390 MB free of 752 MB</text><text x="232" y="520">61.2 GB free of 79.9 GB</text><text x="486" y="520">350 MB free of 360 MB</text><text x="232" y="562">0 bytes free of 2.94 GB</text></g>
      </PreviewFrame>
    </svg>
  );
}

function TaskPreviews() {
  return (
    <div className="absolute bottom-12 left-[453px] flex w-[425px] border border-[#13263a] bg-[#264b6d]">
      <div className="w-[213px] pt-[13px] pb-[8px] pl-[11px]"><LocalDiskPreview /></div>
      <div className="relative grow border border-[#8fa9c9] bg-[#4b72a3] pt-[12px] pb-[7px] pl-[10px]">
        <ThisPcPreview />
        <button aria-label="Close preview" className="absolute top-[11px] right-[10px] grid size-[14px] place-items-center bg-[#c5485a]">
          <svg viewBox="0 0 8 8" className="size-2"><path d="M1 1l6 6M7 1L1 7" stroke="#fff" strokeWidth="2" /></svg>
        </button>
      </div>
    </div>
  );
}

/* ---------- Taskbar ---------- */

const pinned: { label: string; icon: Icon }[] = [
  { label: "Command Prompt", icon: Cmd },
  { label: "Google Chrome", icon: Chrome },
  { label: "Mozilla Firefox", icon: Firefox },
  { label: "Notepad", icon: Notepad },
  { label: "Notepad++", icon: NotepadPlus },
  { label: "Snipping Tool", icon: Snip },
];

const tasks: { label: string; icon: Icon; className: string }[] = [
  { label: "Disk Management", icon: DiskMgmtIcon, className: "border-[#71879a] bg-[#465d71]" },
  { label: "Local Disk (D:)", icon: (p) => <Drive {...p} viewBox="0 8 42 42" />, className: "border-[#71879a] bg-[#465d71]" },
  { label: "This PC", icon: PcAngled, className: "border-[#d3e2ec] bg-[radial-gradient(circle_at_15%_100%,#a5d0d8_0%,#7b9db3_35%,#6f879c_70%,#5d7287_100%)]" },
];

function Taskbar() {
  return (
    <footer className="relative flex h-10 shrink-0 items-center bg-[#203e58] text-white">
      <button aria-label="Start" className="grid w-12 place-items-center"><WinLogo className="size-[22px]" /></button>
      <div className="flex w-[298px] pl-[2px]">
        {pinned.map(({ label, icon: I }) => (
          <button key={label} aria-label={label} className="grid w-[49px] place-items-center"><I className="size-6" /></button>
        ))}
      </div>
      <div className="flex gap-[2px]">
        {tasks.map(({ label, icon: I, className }) => (
          <button key={label} className={`flex h-[38px] w-[158px] items-center gap-[5px] border pl-[9px] text-[12px] ${className}`}>
            <I className="size-[22px]" />
            {label}
          </button>
        ))}
      </div>
      <div className="ml-auto flex items-center gap-2 pr-[17px]">
        <NetTray className="size-4" />
        <ColorTray className="size-4" />
        <VolumeTray className="size-4" />
        <time className="ml-[2px] text-center leading-[18px]">4:11 AM<br />3/29/2023</time>
      </div>
      <svg viewBox="0 0 12 19" className="absolute top-8 left-[686px] h-[19px] w-3"><path d="M.5.5v16l4-4 3 6 2-1-3-6h5z" fill="#fff" stroke="#000" /></svg>
    </footer>
  );
}

export default function App() {
  return (
    <div className="relative flex h-screen flex-col overflow-hidden bg-[#030406] bg-[radial-gradient(ellipse_220px_300px_at_90px_430px,#1a2534_0%,transparent_100%),radial-gradient(ellipse_130px_240px_at_1000px_440px,#0b1a29_0%,transparent_100%)] font-['Open_Sans','Noto_Sans',sans-serif] text-[11px]">
      <div className="relative min-h-0 grow"><DesktopIcons /></div>
      <LocalDiskWindow />
      <DiskManagementWindow />
      <ExplorerWindow />
      <TaskPreviews />
      <Taskbar />
    </div>
  );
}
